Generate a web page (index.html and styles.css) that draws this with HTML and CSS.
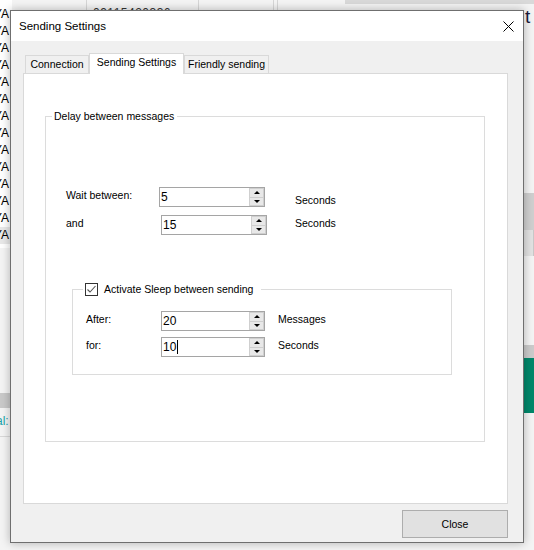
FILE: index.html
```html
<!DOCTYPE html>
<html>
<head>
<meta charset="utf-8">
<link rel="stylesheet" href="styles.css">
</head>
<body>
<div class="desk">
  <div class="bg-list">
    <div>YA</div><div>YA</div><div>YA</div><div>YA</div><div>YA</div><div>YA</div><div>YA</div>
    <div>YA</div><div>YA</div><div>YA</div><div>YA</div><div>YA</div><div>YA</div><div class="sel">YA</div>
  </div>
  <div class="bg-top">
    <span class="vline l1"></span><span class="vline l2"></span><span class="vline l3"></span><span class="vline l4"></span>
    <span class="top-num">09115420336</span>
    <span class="top-box"></span>
  </div>
  <div class="bg-right">
    <span class="big-t">t</span>
    <span class="band gray1"></span>
    <span class="band gray2"></span>
    <span class="band gray3"></span>
    <span class="band green"></span>
  </div>
  <div class="bg-left-low">
    <span class="band lgray"></span>
    <span class="teal">al:</span>
  </div>
</div>

<div class="dialog">
  <div class="titlebar">
    <span class="title">Sending Settings</span>
    <svg class="close" width="11" height="11" viewBox="0 0 11 11"><path d="M0.5 0.5 L10.5 10.5 M10.5 0.5 L0.5 10.5" stroke="#000" stroke-width="1" fill="none"/></svg>
  </div>
  <div class="body">
    <div class="tabs">
      <div class="tab t-conn">Connection</div>
      <div class="tab active t-send">Sending Settings</div>
      <div class="tab t-friend">Friendly sending</div>
    </div>
    <div class="panel">
      <div class="group outer">
        <div class="group-label">Delay between messages</div>
        <div class="row o1">
          <span class="lbl">Wait between:</span>
          <div class="spin"><span class="val">5</span><span class="btns"><span class="sb"><i class="up"></i></span><span class="sb"><i class="dn"></i></span></span></div>
          <span class="unit">Seconds</span>
        </div>
        <div class="row o2">
          <span class="lbl">and</span>
          <div class="spin"><span class="val">15</span><span class="btns"><span class="sb"><i class="up"></i></span><span class="sb"><i class="dn"></i></span></span></div>
          <span class="unit">Seconds</span>
        </div>
        <div class="group inner">
          <div class="group-label check">
            <span class="cbox"><svg width="11" height="11" viewBox="0 0 11 11"><path d="M1.5 5.5 L4 8 L9.5 2" stroke="#555" stroke-width="1.1" fill="none"/></svg></span>
            <span>Activate Sleep between sending</span>
          </div>
          <div class="row i1">
            <span class="lbl">After:</span>
            <div class="spin"><span class="val">20</span><span class="btns"><span class="sb"><i class="up"></i></span><span class="sb"><i class="dn"></i></span></span></div>
            <span class="unit">Messages</span>
          </div>
          <div class="row i2">
            <span class="lbl">for:</span>
            <div class="spin"><span class="val">10<span class="caret"></span></span><span class="btns"><span class="sb"><i class="up"></i></span><span class="sb"><i class="dn"></i></span></span></div>
            <span class="unit">Seconds</span>
          </div>
        </div>
      </div>
    </div>
    <div class="footer">
      <button class="btn">Close</button>
    </div>
  </div>
</div>
</body>
</html>
```

FILE: styles.css
```css
* { box-sizing: border-box; }
html, body { margin: 0; padding: 0; }
body {
  width: 534px;
  height: 550px;
  overflow: hidden;
  position: relative;
  background: #f4f4f4;
  font-family: "Liberation Sans", Arial, sans-serif;
  color: #000;
}

/* background application (partially hidden behind the dialog) */
.desk { position: absolute; left: 0; top: 0; width: 534px; height: 550px; }
.bg-list {
  position: absolute; left: 0; top: 0; width: 12px; height: 248px;
  background: #fff; padding-top: 6px; overflow: hidden;
  font-size: 12px; line-height: 17px;
}
.bg-list div { margin-left: -6px; white-space: nowrap; }
.bg-list .sel { background: #e8e8e8; }
.bg-top { position: absolute; left: 0; top: 0; width: 534px; height: 12px; overflow: hidden; }
.vline { position: absolute; top: 0; width: 1px; height: 12px; background: #d6d6d6; }
.l1 { left: 86px; } .l2 { left: 198px; } .l3 { left: 273px; } .l4 { left: 277px; }
.top-num { position: absolute; left: 93px; top: 6px; font-size: 12px; line-height: 14px; color: #333; letter-spacing: 0.5px; }
.top-box { position: absolute; left: 345px; top: 0; width: 189px; height: 4px; background: #d9d9d9; }
.bg-right { position: absolute; left: 524px; top: 0; width: 10px; height: 550px; }
.big-t { position: absolute; left: 1px; top: 7px; font-size: 19px; line-height: 20px; color: #1b1b3c; }
.band { position: absolute; left: 0; width: 10px; }
.gray1 { top: 193px; height: 37px; background: #cfcfcf; }
.gray2 { top: 230px; height: 26px; background: #e2e2e2; border-right: 1px solid #c8c8c8; }
.gray3 { top: 345px; height: 13px; background: #cbcbcb; }
.green { top: 358px; height: 55px; background: #00876a; }
.bg-left-low { position: absolute; left: 0; top: 393px; width: 12px; height: 44px; border-bottom: 1px solid #d8d8d8; overflow: hidden; }
.lgray { top: 0; height: 15px; background: #c9c9c9; }
.teal { position: absolute; left: -4px; top: 21px; font-size: 12px; color: #1aa2a8; }

/* dialog */
.dialog {
  position: absolute; left: 10px; top: 10px;
  width: 514px; height: 533px;
  border: 1px solid #6f6f6f;
  background: #f0f0f0;
  display: flex; flex-direction: column;
  box-shadow: 0 0 9px rgba(0, 0, 0, 0.28);
}
.titlebar {
  height: 30px; background: #fff;
  display: flex; align-items: center;
  padding-left: 8px;
}
.title { font-size: 11.5px; }
.close { margin-left: auto; margin-right: 9px; display: block; }

.body { flex: 1; padding: 12px 0 0 12px; }
.tabs { display: flex; align-items: flex-end; height: 21px; padding-left: 2px; }
.tab {
  height: 18px; margin-bottom: 1px;
  border: 1px solid #d9d9d9; border-bottom: none;
  background: #f0f0f0;
  font-size: 10.5px; line-height: 17px; text-align: center;
  white-space: nowrap;
}
.tab.active {
  height: 21px; margin-bottom: 0;
  background: #fff;
  position: relative; z-index: 1;
}
.t-conn { width: 64px; }
.t-send { width: 95px; }
.t-friend { width: 85px; }

.panel {
  margin-top: -1px;
  width: 485px; height: 431px;
  background: #fff;
  border: 1px solid #d9d9d9;
  padding: 42px 0 0 21px;
}

.group { position: relative; border: 1px solid #dcdcdc; }
.group.outer { width: 440px; height: 326px; padding: 70px 0 0 20px; }
.group.inner { width: 380px; height: 86px; margin: 54px 0 0 6px; padding: 21px 0 0 13px; }
.group-label {
  position: absolute; top: -8px; left: 6px;
  background: #fff; padding: 0 3px 0 2px;
  font-size: 10.5px; line-height: 14px;
  white-space: nowrap;
}
.group-label.check {
  left: 10px; top: -8px; padding: 0 8px 0 2px;
  display: flex; align-items: center; gap: 6px;
}
.cbox {
  width: 13px; height: 13px; border: 1px solid #333; background: #fff;
  display: flex; align-items: center; justify-content: center;
}
.cbox svg { display: block; }

.row { display: flex; align-items: flex-start; height: 20px; font-size: 10.5px; }
.lbl { line-height: 17px; white-space: nowrap; }
.unit { line-height: 17px; white-space: nowrap; }
.o1 .lbl { width: 93px; }
.o1 .unit { margin-left: 30px; margin-top: 5px; }
.o2 { margin-top: 8px; }
.o2 .lbl { width: 95px; }
.o2 .unit { margin-left: 28px; }
.o1 .spin, .o2 .spin { width: 106px; }
.i1 .lbl, .i2 .lbl { width: 75px; }
.i1 .spin, .i2 .spin { width: 104px; }
.i1 .unit, .i2 .unit { margin-left: 13px; }
.i2 { margin-top: 6px; }

.spin {
  height: 20px; border: 1px solid #a5a5a5; background: #fff;
  display: flex;
}
.val { flex: 1; font-size: 12px; line-height: 18px; padding-left: 1px; display: flex; align-items: center; }
.caret { display: inline-block; width: 1px; height: 14px; background: #000; margin-left: 1px; }
.btns { width: 15px; display: flex; flex-direction: column; }
.sb {
  flex: 1; background: #e8e8e8; border: 1px solid #cfcfcf;
  display: flex; align-items: center; justify-content: center;
}
.sb + .sb { border-top: none; }
.up { width: 0; height: 0; border-left: 3px solid transparent; border-right: 3px solid transparent; border-bottom: 3px solid #000; }
.dn { width: 0; height: 0; border-left: 3px solid transparent; border-right: 3px solid transparent; border-top: 3px solid #000; }

.footer { display: flex; justify-content: flex-end; padding: 6px 15px 0 0; }
.btn {
  width: 106px; height: 28px;
  background: #e1e1e1; border: 1px solid #adadad; border-radius: 0;
  font-family: "Liberation Sans", Arial, sans-serif; font-size: 10.5px; color: #000;
  padding: 0;
}
```
